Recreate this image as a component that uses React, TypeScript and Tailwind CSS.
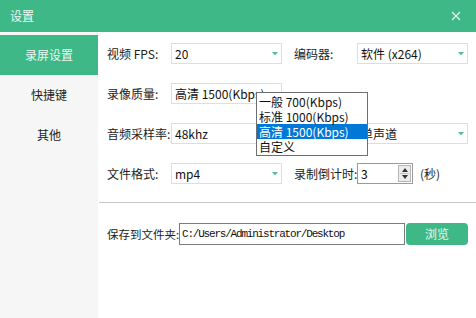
import { useState } from "react";

const font = { fontFamily: '"Noto Sans CJK SC", "Noto Sans", sans-serif' };

function Caret() {
  return (
    <svg width="6" height="4" viewBox="0 0 6 4" className="shrink-0">
      <path d="M0 0 L6 0 L3 3.5 Z" fill="#5bbf9c" />
    </svg>
  );
}

function Select({ value }: { value: string }) {
  return (
    <div className="w-[111px] h-[21px] border border-[#dedede] bg-white flex items-center justify-between gap-1 pl-[3px] pr-[3px] text-[12px] text-[#111]">
      <span className="whitespace-nowrap overflow-hidden leading-[17px]">{value}</span>
      <Caret />
    </div>
  );
}

function Label({ text, w }: { text: string; w: string }) {
  return <span className={`${w} shrink-0 text-[12px] text-[#222] leading-[16px] whitespace-nowrap`}>{text}</span>;
}

const sideItems = ["录屏设置", "快捷键", "其他"];
const qualityOptions = ["一般 700(Kbps)", "标准 1000(Kbps)", "高清 1500(Kbps)", "自定义"];

export default function App() {
  const [active] = useState(0);
  const [picked] = useState(2);

  return (
    <div className="w-[476px] h-[318px] flex flex-col bg-white overflow-hidden" style={font}>
      {/* title bar */}
      <div className="h-8 shrink-0 bg-[#3db886] flex items-center justify-between pl-[10px] pr-[15px]">
        <span className="text-white/90 text-[12px] leading-[16px]">设置</span>
        <svg width="10" height="10" viewBox="0 0 10 10">
          <path d="M1 1 L9 9 M9 1 L1 9" stroke="#e6f7ef" strokeWidth="1.3" />
        </svg>
      </div>

      <div className="flex flex-1">
        {/* sidebar */}
        <aside className="w-[98px] shrink-0 bg-[#f6f6f6] pt-[3px] flex flex-col">
          {sideItems.map((s, i) => (
            <div
              key={s}
              className={`h-10 flex items-center justify-center text-[12px] leading-[16px] ${
                i === active ? "bg-[#3db886] text-white/90" : "text-[#222]"
              }`}
            >
              {s}
            </div>
          ))}
        </aside>

        {/* content */}
        <main className="flex-1 flex flex-col relative">
          <div className="pl-[9px] pt-[11px] flex flex-col gap-[19px]">
            <div className="flex items-center">
              <Label text="视频 FPS:" w="w-[64px]" />
              <Select value="20" />
              <span className="w-[12px]" />
              <Label text="编码器:" w="w-[63px]" />
              <Select value="软件 (x264)" />
            </div>
            <div className="flex items-center">
              <Label text="录像质量:" w="w-[64px]" />
              <Select value="高清 1500(Kbps)" />
            </div>
            <div className="flex items-center">
              <Label text="音频采样率:" w="w-[64px]" />
              <Select value="48khz" />
              <span className="w-[12px]" />
              <Label text="声道:" w="w-[63px]" />
              <Select value="单声道" />
            </div>
            <div className="flex items-center">
              <Label text="文件格式:" w="w-[64px]" />
              <Select value="mp4" />
              <span className="w-[12px]" />
              <Label text="录制倒计时:" w="w-[63px]" />
              <div className="w-[56px] h-[21px] border border-[#9a9a9a] bg-white flex items-center justify-between pl-[3px] pr-[1px] text-[12px] leading-[16px]">
                <span>3</span>
                <div className="w-[13px] h-[17px] border border-[#b5b5b5] bg-[#ececec] flex flex-col items-center justify-around py-[1px]">
                  <svg width="6" height="4" viewBox="0 0 6 4">
                    <path d="M0 4 L6 4 L3 0 Z" fill="#333" />
                  </svg>
                  <span className="w-[9px] h-px bg-[#c4c4c4]" />
                  <svg width="6" height="4" viewBox="0 0 6 4">
                    <path d="M0 0 L6 0 L3 4 Z" fill="#333" />
                  </svg>
                </div>
              </div>
              <span className="ml-[7px] text-[12px] text-[#222] leading-[16px]">(秒)</span>
            </div>
          </div>

          <div className="h-px bg-[#c6c6c6] mt-[18px] ml-px" />

          <div className="pl-[9px] mt-[20px] flex items-center">
            <span className="w-[72px] shrink-0 text-[11.5px] text-[#222] leading-[16px] whitespace-nowrap">保存到文件夹:</span>
            <div className="w-[226px] h-[22px] border border-[#7c7c7c] bg-white flex items-center pl-[2px] text-[11px] text-[#111] tracking-[-1.2px] whitespace-nowrap" style={{ fontFamily: '"Liberation Mono", monospace' }}>
              C:/Users/Administrator/Desktop
            </div>
            <button className="ml-px w-[62px] h-[22px] rounded-[4px] bg-[#3db886] text-white/90 text-[12px] leading-[16px]">浏览</button>
          </div>

          {/* open quality dropdown */}
          <ul className="absolute left-[158px] top-[60px] w-[112px] border border-[#6e6e6e] bg-white py-px text-[12px]">
            {qualityOptions.map((o, i) => (
              <li
                key={o}
                className={`h-[15px] leading-[15px] flex items-center pl-[2px] whitespace-nowrap ${
                  i === picked ? "bg-[#0078d7] text-white" : "text-[#111]"
                }`}
              >
                {o}
              </li>
            ))}
          </ul>
        </main>
      </div>
    </div>
  );
}
